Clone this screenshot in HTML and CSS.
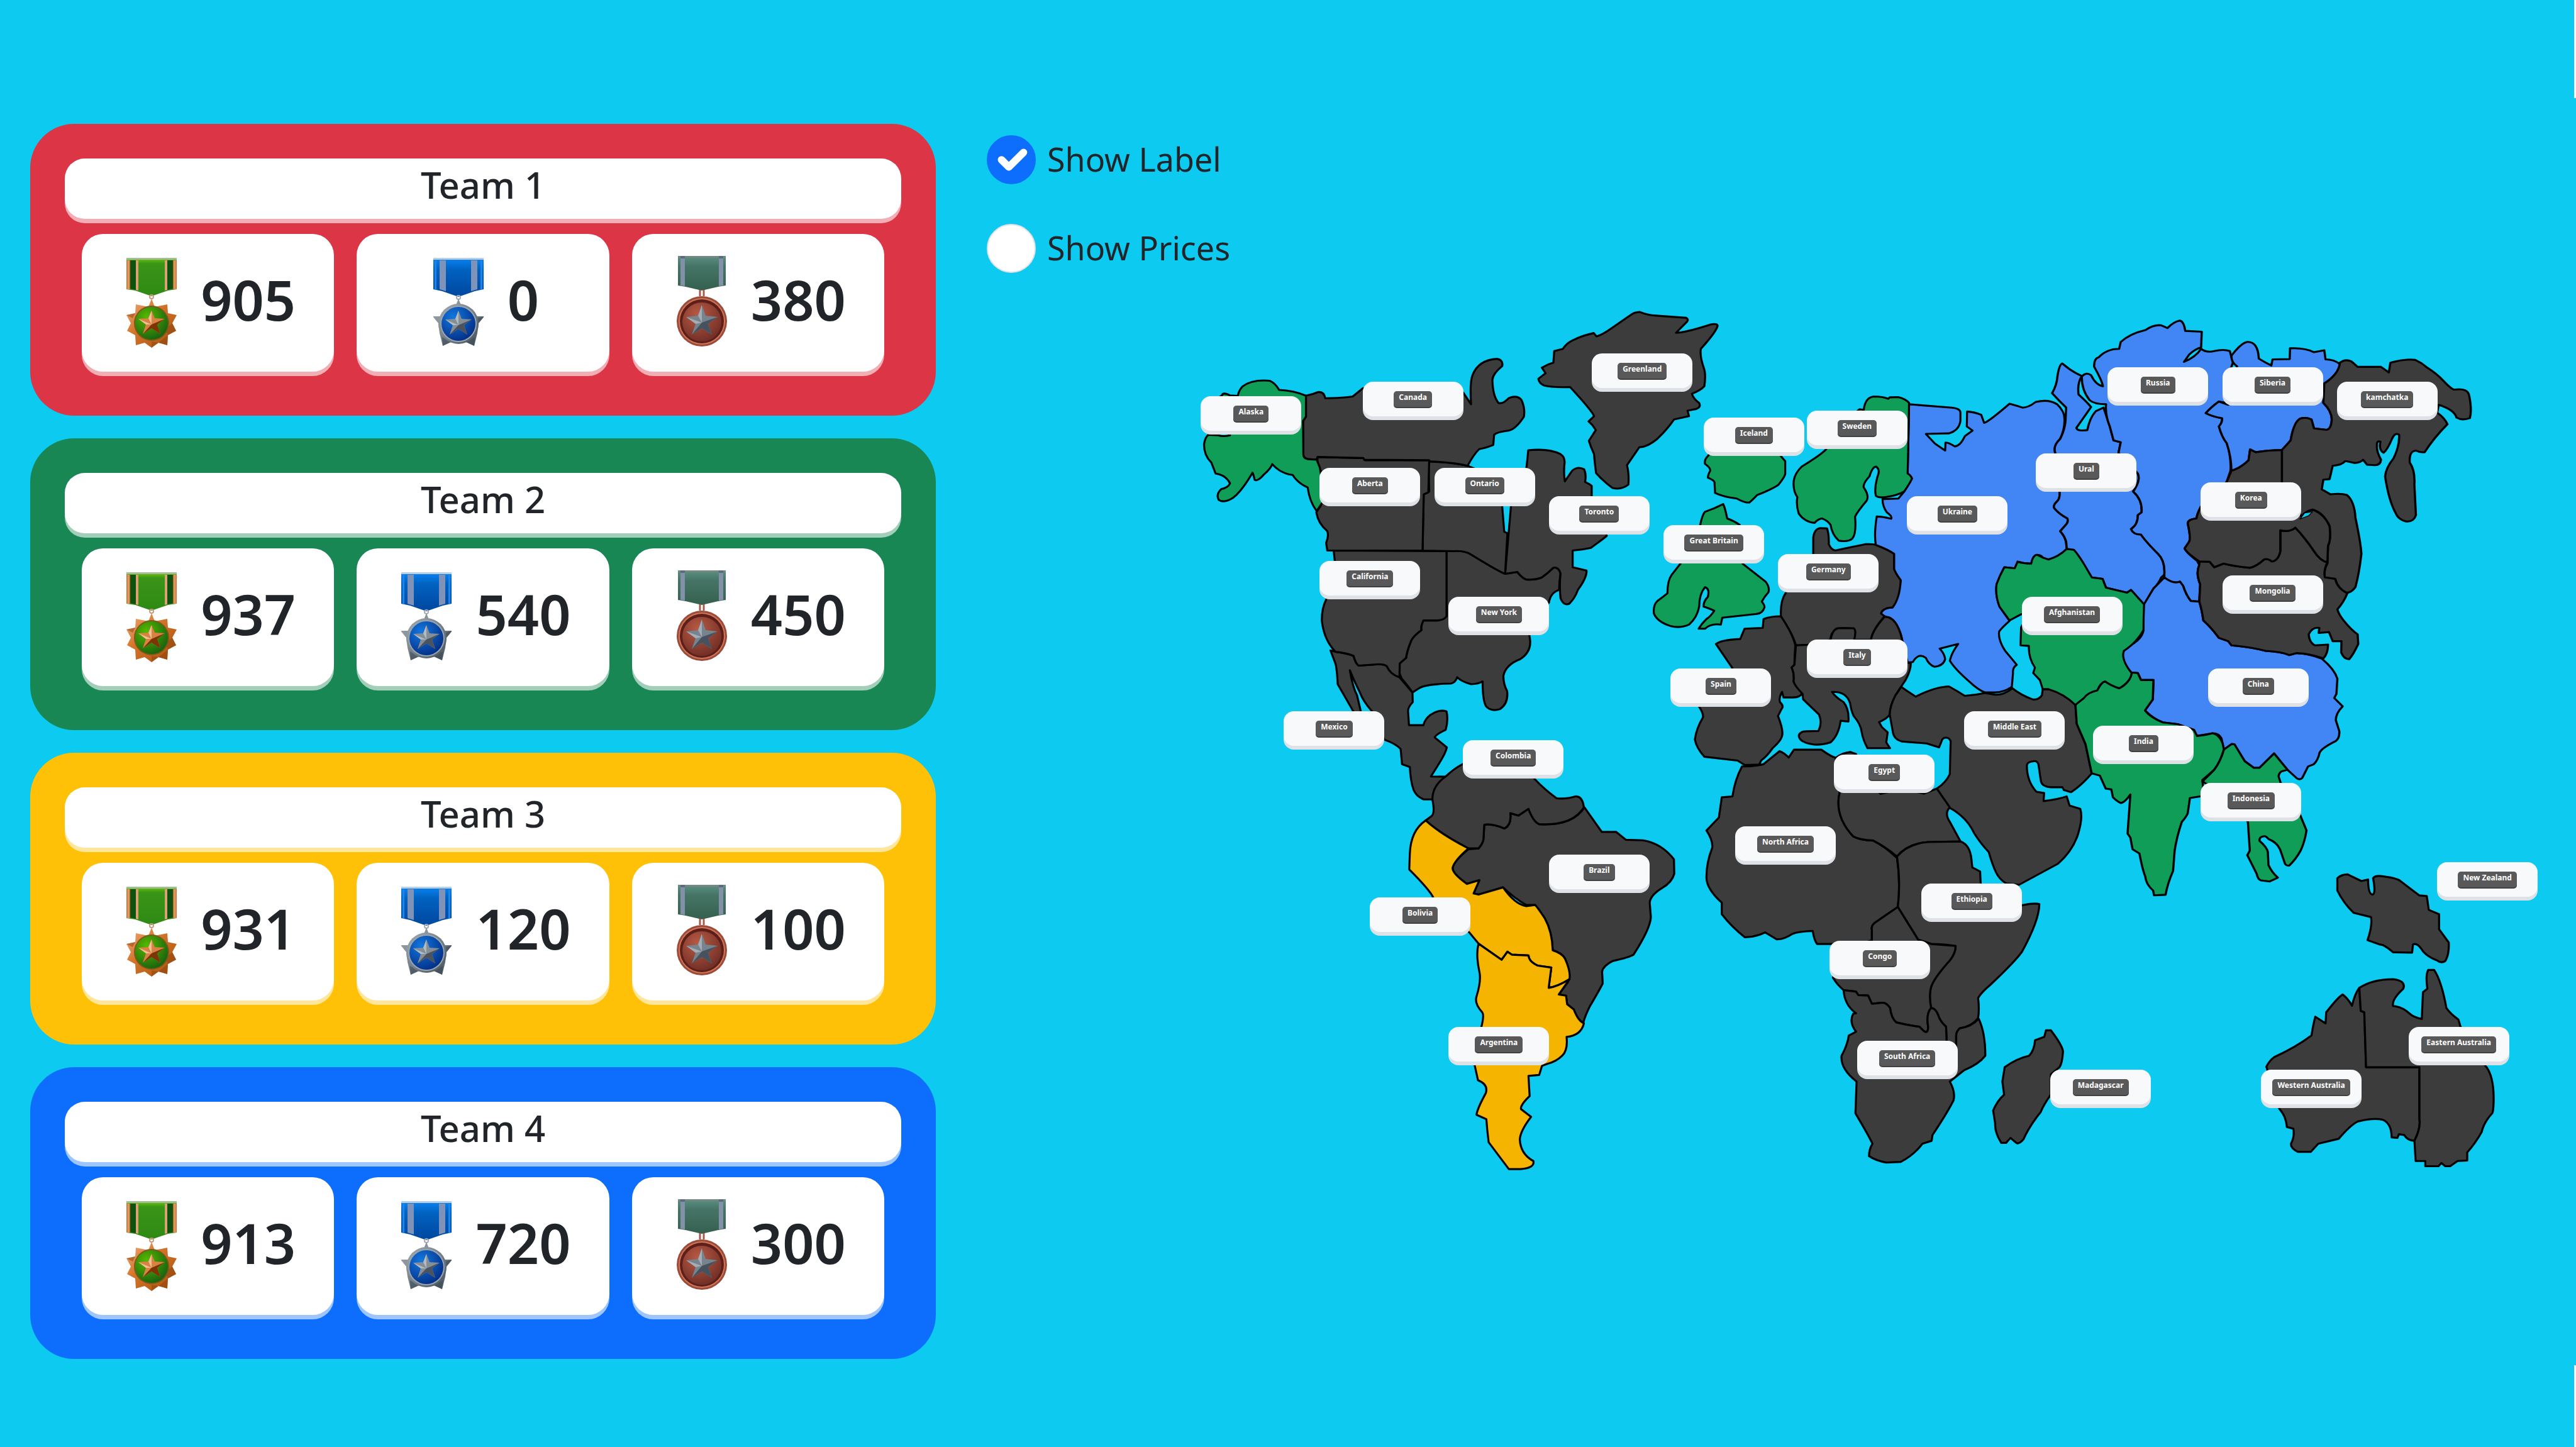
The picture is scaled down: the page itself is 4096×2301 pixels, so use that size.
FILE: index.html
```html
<!DOCTYPE html>
<html lang="en">
<head>
<meta charset="utf-8">
<meta name="viewport" content="width=device-width, initial-scale=1">
<title>World Map Game</title>
<link rel="stylesheet" href="styles.css">
</head>
<body>
<svg class="defs" width="0" height="0" aria-hidden="true">
  <defs>
    <linearGradient id="greenRibbon" x1="0" y1="0" x2="0" y2="1"><stop offset="0" stop-color="#6fce00"/><stop offset=".15" stop-color="#3a9418"/><stop offset="1" stop-color="#2f8a14"/></linearGradient>
    <linearGradient id="blueRibbon" x1="0" y1="0" x2="0" y2="1"><stop offset="0" stop-color="#0a84f5"/><stop offset=".3" stop-color="#0062c0"/><stop offset="1" stop-color="#0047a0"/></linearGradient>
    <linearGradient id="tealRibbon" x1="0" y1="0" x2="0" y2="1"><stop offset="0" stop-color="#5b8f82"/><stop offset=".3" stop-color="#457466"/><stop offset="1" stop-color="#35604f"/></linearGradient>
    <linearGradient id="copper" x1="0" y1="0" x2="1" y2="1"><stop offset="0" stop-color="#f3b184"/><stop offset=".4" stop-color="#d4752b"/><stop offset="1" stop-color="#a8500c"/></linearGradient>
    <linearGradient id="steel" x1="0" y1="0" x2="1" y2="1"><stop offset="0" stop-color="#a4adb3"/><stop offset=".5" stop-color="#74808a"/><stop offset="1" stop-color="#45515b"/></linearGradient>
    <radialGradient id="greenCore" cx=".35" cy=".3" r=".8"><stop offset="0" stop-color="#55b800"/><stop offset="1" stop-color="#155c10"/></radialGradient>
    <radialGradient id="blueCore" cx=".35" cy=".3" r=".8"><stop offset="0" stop-color="#1277e0"/><stop offset="1" stop-color="#022a80"/></radialGradient>
    <radialGradient id="redCore" cx=".4" cy=".3" r=".8"><stop offset="0" stop-color="#b85a44"/><stop offset="1" stop-color="#6a2a22"/></radialGradient>
    <symbol id="medal-green" viewBox="0 0 80 150">
      <path fill="url(#greenRibbon)" d="M0 3h80v50l-14 2-26 9-26-9-14-2z"/>
      <path fill="#a6bb9a" d="M0 3h80v3H0z"/>
      <path fill="#0e5210" d="M6 7h9v47l-9-2zM65 7h9v45l-9 2z"/>
      <path fill="#cf7a35" d="M0 7h6v46H0zM74 7h6v46h-6z"/>
      <path fill="#dba173" d="M2 7h2v46H2zM76 7h2v46h-2zM15 7h4v48l-4-1zM61 7h4v47l-4 1z"/>
      <circle cx="40" cy="65" r="3" fill="none" stroke="#c99a7d" stroke-width="2"/>
      <path fill="url(#copper)" d="M40 68l5 13 20-4 1 14 14 3-7 13 6 12-13 7-1 16-14-4-11 8-11-8-14 4-1-16-13-7 6-12-7-13 14-3 1-14 20 4z"/>
      <path fill="#8a430e" opacity=".5" d="M73 107l6 12-13 7-4-10zM51 138l-11 8v-10zM66 126l-1 16-14-4zM14 91L0 94l10 5z"/>
      <circle cx="40" cy="107" r="28" fill="#7b5a1a"/>
      <circle cx="40" cy="107" r="26" fill="url(#greenCore)"/>
      <path fill="#d88243" d="M40 87l5 12 16 1-12 9 5 15-14-9-14 9 5-15-12-9 16-1z"/>
      <path fill="#7c3606" d="M40 109l9 0 5 15-14-9zM40 109l21-9-12 9zM40 109l-14 15 14-9z"/>
      <path fill="#f6be95" d="M40 87v22l-5-10zM19 100l21 9-9 0z"/>
    </symbol>
    <symbol id="medal-blue" viewBox="0 0 80 150">
      <path fill="url(#blueRibbon)" d="M0 3h80v50l-14 3-26 9-26-9-14-3z"/>
      <path fill="#bccee4" d="M0 3h80v3H0z"/>
      <path fill="#1a86ec" d="M2 7h3v47l-3-1zM75 7h3v46l-3 1z"/>
      <path fill="#7f93b8" d="M10 7h10v49l-10-3zM60 7h10v46l-10 3z"/>
      <circle cx="40" cy="66" r="3" fill="none" stroke="#a5adb3" stroke-width="2"/>
      <path fill="url(#steel)" d="M40 68l4 10 14 8 9 10h14l-9 11-2 16-5 20-13-6H28l-13 6-5-20-2-16-9-11h14l9-10 14-8z"/>
      <path fill="#36424c" opacity=".5" d="M81 96l-9 11-4-7zM65 143l-13-6 14-8zM15 143l13-6-14-8z"/>
      <circle cx="40" cy="108" r="32" fill="url(#steel)"/>
      <circle cx="40" cy="108" r="29" fill="#9aa5ad"/>
      <circle cx="40" cy="108" r="27" fill="url(#blueCore)"/>
      <path fill="#848e97" d="M40 87l5 13 16 1-12 9 5 15-14-9-14 9 5-15-12-9 16-1z"/>
      <path fill="#4b545e" d="M40 110l9 0 5 15-14-9zM40 110l21-9-12 9zM40 110l-14 15 14-9z"/>
      <path fill="#b3bbc2" d="M40 87v23l-5-10zM19 101l21 9-9 0z"/>
    </symbol>
    <symbol id="medal-red" viewBox="0 0 80 150">
      <path fill="url(#tealRibbon)" d="M2 0h76v47l-12 2-26 6-26-6-12-2z"/>
      <path fill="#73897f" d="M2 0h76v3H2z"/>
      <path fill="#8391a8" d="M6 3h7v45l-7-1zM67 3h7v44l-7 1z"/>
      <path fill="#586b80" d="M6 0h7v4H6zM67 0h7v4h-7z"/>
      <path fill="none" stroke="#a85a4a" stroke-width="3" d="M37 54v10M43 54v10"/>
      <circle cx="40" cy="104" r="40" fill="#9c4a3a"/>
      <circle cx="40" cy="104" r="37" fill="#cd7757"/>
      <circle cx="40" cy="104" r="35" fill="#5e1f1a"/>
      <circle cx="40" cy="105" r="31" fill="url(#redCore)"/>
      <path fill="#77838d" d="M40 78l6 17 19 2-15 11 6 17-16-10-16 10 6-17-15-11 19-2z"/>
      <path fill="#46535e" d="M40 106l10 2 6 17-16-10zM40 106l25-9-15 11zM40 106l-16 19 16-10z"/>
      <path fill="#a3adb5" d="M40 78v28l-6-11zM15 97l25 9-10 2z"/>
    </symbol>
  </defs>
</svg>

<main class="board">
  <section class="teams">
    <article class="team team-red">
      <h2 class="team-name">Team 1</h2>
      <div class="scores">
        <div class="score"><svg class="medal"><use href="#medal-green"/></svg><span>905</span></div>
        <div class="score"><svg class="medal"><use href="#medal-blue"/></svg><span>0</span></div>
        <div class="score"><svg class="medal"><use href="#medal-red"/></svg><span>380</span></div>
      </div>
    </article>
    <article class="team team-green">
      <h2 class="team-name">Team 2</h2>
      <div class="scores">
        <div class="score"><svg class="medal"><use href="#medal-green"/></svg><span>937</span></div>
        <div class="score"><svg class="medal"><use href="#medal-blue"/></svg><span>540</span></div>
        <div class="score"><svg class="medal"><use href="#medal-red"/></svg><span>450</span></div>
      </div>
    </article>
    <article class="team team-yellow">
      <h2 class="team-name">Team 3</h2>
      <div class="scores">
        <div class="score"><svg class="medal"><use href="#medal-green"/></svg><span>931</span></div>
        <div class="score"><svg class="medal"><use href="#medal-blue"/></svg><span>120</span></div>
        <div class="score"><svg class="medal"><use href="#medal-red"/></svg><span>100</span></div>
      </div>
    </article>
    <article class="team team-blue">
      <h2 class="team-name">Team 4</h2>
      <div class="scores">
        <div class="score"><svg class="medal"><use href="#medal-green"/></svg><span>913</span></div>
        <div class="score"><svg class="medal"><use href="#medal-blue"/></svg><span>720</span></div>
        <div class="score"><svg class="medal"><use href="#medal-red"/></svg><span>300</span></div>
      </div>
    </article>
  </section>

  <section class="world">
    <div class="options">
      <label class="option"><input type="checkbox" checked><span>Show Label</span></label>
      <label class="option"><input type="checkbox"><span>Show Prices</span></label>
    </div>
    <div class="map">
      <svg class="land" viewBox="2538 718 3165 1583">
        <g transform="translate(2800 1600) scale(.63776)">
          <path d="M1102 290L1162 375L1212 375L1245 402L1305 404Q1370 415 1412 470L1413 520Q1405 550 1370 570Q1330 595 1328 620L1332 670Q1330 710 1272 800Q1255 810 1200 822Q1165 840 1163 860Q1165 890 1165 900Q1150 930 1120 980Q1105 1010 1098 1035Q1080 1030 1065 990L1042 972L1038 942L1013 938L1045 895Q1055 860 1035 815Q1025 795 992 785Q990 720 965 675Q935 630 930 628L900 628Q860 605 820 567L735 592L718 588L738 542L695 555Q645 520 645 500Q650 475 700 435L735 432Q750 415 752 400L755 350Q780 345 825 363Q850 350 845 310L873 318L908 295Q925 340 945 348Q1060 355 1102 290Z"/>
        </g>
        <g transform="translate(2640 680) scale(.63776 .61224)">
          <path d="M473 1238L490 1243Q530 1248 553 1258Q560 1285 570 1293L640 1288Q660 1288 668 1295Q680 1325 712 1335L757 1390L758 1425Q740 1445 742 1460L745 1508L795 1508Q800 1485 820 1470Q850 1450 875 1458Q882 1490 872 1525Q840 1540 834 1552L876 1588Q874 1605 850 1645L821 1693L871 1694L826 1776L796 1776Q770 1765 761 1742Q750 1710 748 1659L721 1649L716 1594Q700 1575 659 1560L640 1500L617 1458Q585 1420 575 1390Q560 1360 540 1310Q550 1370 565 1400L578 1458L575 1490L552 1458Q520 1400 498 1360Q495 1300 490 1285Z"/>
          <path d="M875 880L900 878Q940 878 960 892Q1050 950 1078 962L1120 955Q1135 975 1150 982Q1180 985 1205 975Q1225 960 1245 940Q1262 935 1270 960Q1265 990 1265 1020Q1235 1030 1230 1065L1180 1120L1162 1185Q1175 1240 1130 1270Q1080 1290 1072 1330Q1072 1360 1085 1385Q1090 1430 1060 1450Q1030 1460 1012 1440Q1000 1420 1000 1350Q985 1360 960 1360Q925 1350 912 1335Q905 1355 890 1358Q800 1360 780 1375L757 1390Q745 1370 720 1340Q705 1310 713 1285L735 1265Q738 1240 750 1210Q755 1190 788 1165Q785 1150 795 1130L840 1130Q865 1130 875 1115Z"/>
          <path d="M484 878L875 880L875 1115Q865 1130 840 1130L795 1130Q785 1150 788 1165Q755 1190 750 1210Q738 1240 735 1265L713 1285L712 1335Q680 1325 668 1295Q660 1288 640 1288L570 1293Q560 1285 553 1258Q530 1248 490 1243Q450 1200 443 1130Q443 1085 458 1055L480 1000L488 915Z"/>
          <path d="M1152 578Q1155 550 1158 516Q1230 508 1270 530Q1285 540 1284 560Q1280 600 1285 628Q1300 605 1310 590Q1330 572 1352 585Q1360 605 1355 630Q1375 640 1378 645L1378 700L1410 750L1430 825Q1400 850 1375 868Q1345 875 1312 878L1312 938Q1340 945 1360 950Q1362 975 1330 1020Q1320 1050 1300 1070Q1280 1078 1270 1050Q1265 1010 1270 960Q1262 935 1245 940Q1225 960 1205 975Q1180 985 1150 982Q1135 975 1120 955L1078 962L1098 720L1120 650Z"/>
          <path d="M812 556Q900 560 948 572L990 590L1050 640L1068 720L1075 810L1086 815L1078 962Q1050 950 960 892Q940 878 900 880L792 878L796 675L815 665Z"/>
          <path d="M428 540L587 544L592 552L815 552L812 668L796 675L792 878L462 878L458 850Q468 825 462 808Q430 780 424 740L440 715L445 600L428 570Z"/>
          <path d="M388 319Q410 315 430 306Q450 303 455 328Q510 328 550 322L585 292L700 300L860 290L933 308L960 350Q955 270 965 245Q985 190 1050 186Q1072 190 1068 212Q1035 240 1034 262Q1035 320 1055 345Q1070 350 1090 328Q1120 315 1135 335Q1148 365 1143 395Q1115 440 1090 445Q1050 450 1040 460L1037 497Q1010 508 988 512Q970 530 948 572Q900 560 815 556L815 552L590 550L587 544L428 540L425 550L395 548Q378 545 379 530L378 410L388 395Z"/>
          <path class="green" d="M388 319Q345 300 295 298Q280 272 262 265Q200 260 168 286Q155 300 152 320L125 318Q100 305 97 318L60 345L100 440L125 462Q100 468 85 462L50 460Q38 470 35 495Q35 535 60 560Q66 575 75 600Q110 605 125 635Q120 650 95 656Q75 675 86 695Q105 708 135 688Q165 665 203 597Q207 605 210 622Q220 630 240 606Q268 580 271 566Q300 600 342 605Q360 635 394 650Q400 700 425 735L455 690L436 578L425 550L395 548Q378 545 379 530L378 410L388 395Z"/>
          <path d="M1510 30Q1525 17 1545 17Q1570 28 1600 30L1705 38Q1715 44 1708 52L1670 92Q1700 92 1790 62Q1812 58 1814 66Q1812 85 1756 150Q1752 175 1765 215Q1775 240 1768 285Q1755 300 1725 312Q1730 330 1750 345Q1758 360 1740 367L1710 373L1715 393L1663 405Q1640 440 1605 475Q1570 505 1543 505L1500 570Q1508 600 1505 640Q1480 660 1450 652Q1420 630 1393 598Q1388 560 1386 530Q1375 505 1368 482L1392 443L1380 425L1367 412L1386 393Q1380 375 1303 288Q1240 290 1215 283Q1195 275 1193 258L1218 238L1205 218Q1225 205 1245 200L1248 158L1278 150Q1290 130 1310 120Q1350 100 1385 93L1395 105Q1415 98 1440 80Z"/>
        </g>
        <g transform="translate(2800 1600) scale(.63776)">
          <path d="M680 140Q650 155 620 184Q575 215 575 262Q585 310 572 320L552 335Q600 380 700 432L735 432Q750 415 752 400L755 350Q780 345 825 363Q850 350 845 310L873 318L908 295Q925 340 945 348Q1060 355 1100 290Q1095 250 1070 252Q1035 262 1005 258Q960 225 928 190L900 140L780 110Z"/>
          <path class="yellow" d="M552 335Q600 380 700 432Q650 475 645 500Q645 520 695 555L738 542L718 588L735 592L820 567Q860 625 900 632L930 628Q935 630 965 675Q990 720 992 785Q1025 795 1035 815Q1055 860 1050 885Q1010 910 978 915L987 845L940 838Q910 825 908 803L850 800L835 790L815 818L735 762L702 722L640 680L578 602Q565 575 495 505L497 450Q500 370 552 335Z"/>
          <path class="yellow" d="M735 762L815 818L835 790L850 800L908 803Q910 825 940 838L987 845L978 915Q1010 910 1050 885L1013 938L1038 942L1042 972L1065 990Q1080 1030 1100 1038Q1090 1080 1040 1085Q1045 1130 1025 1150Q1005 1170 975 1178L955 1185L945 1217L908 1220L912 1290Q880 1320 882 1335L917 1362Q880 1410 878 1440Q880 1490 925 1515Q930 1540 880 1543L840 1543L770 1450Q765 1410 762 1370L728 1355Q730 1335 760 1280Q770 1250 733 1235L722 1185L700 1120L745 1050Q755 1010 748 1000Q720 970 728 945Q745 890 738 860Q725 800 735 762Z"/>
        </g>
        <g transform="translate(3600 680) scale(.63776 .61224)">
          <path class="blue" d="M972 350L1120 362Q1150 365 1150 380L1150 410Q1145 445 1110 455L1030 457L1062 492L1097 517Q1098 500 1098 488Q1110 488 1130 502Q1150 500 1165 465L1192 445L1172 430L1173 376Q1200 378 1222 388L1232 417Q1245 415 1320 348Q1345 355 1365 362Q1385 362 1410 342Q1455 330 1485 350Q1510 375 1510 400Q1512 440 1495 475Q1470 500 1478 525L1460 590L1493 665Q1495 690 1485 700Q1470 715 1475 725Q1490 745 1520 762Q1525 775 1515 785L1495 808Q1510 825 1515 845L1518 872Q1490 905 1455 910L1438 908Q1430 890 1410 895Q1405 915 1395 925Q1370 925 1348 918L1338 942L1302 938Q1285 970 1275 1000Q1270 1040 1285 1080L1320 1132Q1295 1155 1284 1170Q1280 1200 1305 1240Q1325 1265 1345 1290Q1330 1300 1332 1320L1328 1370Q1300 1390 1270 1390L1235 1390Q1210 1380 1180 1350Q1130 1305 1113 1275Q1120 1245 1142 1215L1078 1232Q1095 1250 1097 1270Q1090 1295 1060 1297Q1040 1290 1030 1265Q1005 1245 985 1280L967 1282L955 1240L948 1200Q940 1150 905 1120Q880 1115 875 1105Q880 1085 915 1083Q935 1050 943 985Q925 960 920 945L920 890Q900 875 857 858Q850 820 860 755Q880 755 910 763Q915 755 895 740Q880 720 880 692L935 690L955 665L982 618L967 600Z"/>
          <path d="M640 890L640 830Q645 795 670 797L688 798Q695 820 694 855Q705 880 720 877Q770 865 820 855Q850 853 857 858Q900 875 920 890L920 945Q925 960 943 985Q940 1050 915 1083Q880 1085 875 1105L887 1115Q845 1165 840 1200L840 1240L782 1230L782 1195Q790 1165 780 1160Q740 1155 720 1160Q700 1175 700 1200L660 1218L580 1220Q570 1180 528 1115Q525 1060 545 1030L580 980Z"/>
          <path d="M528 1115Q570 1180 578 1220Q575 1260 575 1290L565 1300Q575 1320 572 1350Q575 1365 603 1392Q595 1408 570 1408L537 1408L532 1388Q520 1410 525 1425Q540 1440 530 1450L518 1475Q535 1520 533 1540Q533 1560 500 1590Q480 1620 460 1635L453 1650L403 1652L378 1636L263 1622Q235 1590 230 1560Q235 1520 258 1480Q260 1465 245 1442L300 1380L360 1302L303 1215Q320 1200 387 1197L402 1160L465 1157L468 1125Q490 1115 528 1115Z"/>
          <path d="M580 1220L620 1218L700 1200Q705 1165 725 1158L780 1158Q790 1165 782 1200L840 1200Q845 1165 887 1117Q930 1115 948 1200L967 1282L978 1285Q978 1310 960 1345Q940 1375 925 1400Q905 1440 905 1470Q895 1485 868 1497L878 1515L898 1534L893 1570L906 1591L828 1591Q812 1560 808 1534Q805 1505 780 1475Q770 1450 768 1430Q755 1385 705 1388Q715 1405 745 1425Q765 1450 762 1495L735 1492Q728 1545 700 1570Q670 1580 643 1578Q590 1570 590 1545Q595 1530 615 1530L658 1529Q672 1500 660 1470L605 1415L603 1395Q575 1365 572 1350Q575 1320 565 1300L575 1290Z"/>
          <path d="M945 1370Q965 1385 995 1405Q1060 1370 1110 1368Q1140 1385 1165 1402Q1200 1400 1235 1392L1270 1398Q1300 1400 1330 1375Q1360 1400 1400 1415Q1420 1418 1432 1400L1435 1378L1455 1378Q1510 1395 1548 1435L1553 1503L1583 1576L1605 1682Q1570 1725 1533 1750L1508 1742L1503 1732L1463 1732Q1430 1730 1428 1706L1420 1649Q1415 1635 1403 1638Q1380 1640 1380 1654Q1380 1710 1413 1748L1440 1753L1438 1782Q1490 1775 1518 1765L1528 1798L1565 1810Q1575 1840 1558 1899Q1540 1960 1488 2008L1353 2084L1308 2079Q1285 2065 1273 2039Q1260 2010 1248 1966Q1220 1935 1198 1899Q1180 1860 1153 1836Q1130 1815 1113 1807L1068 1737Q1100 1715 1113 1685L1116 1565Q1110 1552 1098 1553Q1087 1555 1085 1565L1076 1588L1033 1574L948 1567Q920 1560 916 1534L905 1470Q905 1440 925 1400Z"/>
          <path class="green" d="M972 345Q960 330 935 324L905 325L900 330Q880 322 850 322Q820 325 815 370L800 368L720 440L685 512Q670 530 600 575Q570 605 572 640Q572 665 585 685Q580 715 590 745Q610 775 645 778Q655 765 670 762Q690 770 700 785Q705 820 728 842Q760 848 775 835Q790 820 785 755Q795 735 825 698Q835 680 815 650Q812 635 835 610Q845 575 858 575Q870 585 866 600Q850 650 857 680Q865 688 890 685Q930 680 955 665Q975 635 982 618Q978 605 967 600Q970 480 972 345Z"/>
          <path class="green" d="M275 537Q262 550 265 565Q285 580 283 590Q275 605 275 615Q298 625 298 632L300 670Q330 685 375 690Q400 705 418 705Q430 695 445 678Q500 655 520 640Q543 610 543 600L543 555L530 540L500 490L400 470L310 490Z"/>
          <path class="green" d="M248 788Q255 750 265 738Q300 725 328 710Q335 725 342 762Q365 770 385 785L410 860L395 925L475 990Q490 1010 485 1028Q470 1045 462 1062Q475 1080 470 1085Q465 1105 440 1107L325 1120L320 1145Q285 1140 265 1160L243 1160Q255 1140 270 1125Q285 1115 297 1095Q275 1085 260 1080Q260 1060 275 1045Q282 1015 265 1010Q245 1035 245 1080Q238 1120 210 1145Q180 1160 145 1150Q100 1135 88 1105Q85 1075 100 1060Q120 1045 135 1032Q135 985 150 965L180 925L230 860Z"/>
        </g>
        <g transform="translate(4560 680) scale(.68878 .61224)">
          <path class="blue" d="M-2 203Q25 230 60 248Q45 275 50 315Q75 340 90 360Q65 400 43 435Q45 448 78 443Q85 400 105 375L130 362L150 430L162 480L185 487L178 525L240 600Q250 625 225 665Q255 695 252 740L240 750Q240 785 218 800Q225 820 250 820Q265 845 305 890Q328 915 325 965L315 975Q305 1000 290 1015L260 1075L218 1020L205 1030L138 1012L127 980L92 975Q60 920 35 880L12 872L10 845Q5 825 -9 808L9 785Q18 775 14 762Q-14 745 -28 725Q-33 715 -19 700Q-9 690 -11 665L-42 590L-25 525Q-33 500 -9 475Q6 440 8 410L10 362Q-15 335 -35 310Q-20 280 -18 250Q-12 205 -2 203Z"/>
          <path class="blue" d="M60 250Q75 232 90 245Q105 280 128 285Q125 265 100 215Q98 185 115 180Q140 150 180 150L185 125Q215 95 265 82Q290 62 315 65L335 75Q355 52 375 48Q388 52 392 85L445 88L443 145Q425 150 405 170L388 197Q425 180 443 150Q460 165 485 158Q515 150 535 158L545 200L540 215L525 345L500 340Q475 360 458 382Q480 395 510 400Q512 415 500 430Q510 470 525 490Q540 540 537 590L525 630L480 690L442 720Q430 745 428 762Q400 765 400 780Q410 830 405 845L390 870Q395 885 430 915L437 930Q425 960 440 1000L437 1062L410 1060Q395 1040 385 1005L375 990Q355 1000 325 980L325 965Q328 915 305 890Q265 845 250 820Q225 820 218 800Q240 785 240 750L252 740Q255 695 225 665Q250 625 240 600L178 525L185 487L162 480L150 430Q135 390 138 350Q100 350 85 335Q60 300 60 250Z"/>
          <path class="blue" d="M540 175Q570 130 590 125Q625 122 628 185Q650 200 668 210L672 188L727 187L728 148Q775 145 805 162L838 155L842 188Q870 188 888 205Q885 240 838 275L835 345Q862 375 862 405Q860 440 845 442L805 437L797 405Q780 395 760 402Q740 415 730 480L705 515Q660 515 618 523L600 513L595 552Q570 580 540 590Q540 540 525 490Q510 470 500 430Q512 415 510 400Q480 395 458 382Q475 360 500 340L530 352L550 280L558 213Q540 200 540 175Z"/>
          <path class="blue" d="M325 975Q355 1000 375 990L385 1005Q395 1040 410 1060L437 1062Q445 1090 450 1130Q475 1155 500 1193L530 1205L540 1220Q600 1225 650 1240Q700 1243 725 1255L750 1248Q790 1250 830 1268Q870 1305 880 1340L877 1395L870 1410L897 1440Q875 1465 875 1490L886 1529Q888 1555 875 1565Q830 1590 823 1607Q818 1635 804 1649L786 1657L767 1699Q760 1707 750 1700L720 1669L677 1610L630 1662L612 1662L583 1638L550 1581L541 1576L516 1596L508 1555Q500 1537 480 1537L428 1547L420 1525L370 1505L320 1498Q290 1485 263 1455L288 1415L290 1345L250 1345L240 1320L220 1318Q180 1275 192 1245Q200 1230 230 1210Q255 1190 258 1165L258 1075L290 1015Z"/>
          <path d="M888 200Q905 185 925 195L945 215L1020 215L1045 235L1050 200Q1100 185 1130 190Q1150 200 1165 215Q1200 240 1220 265Q1245 295 1255 297Q1300 290 1303 320Q1312 370 1305 400Q1280 410 1262 398Q1255 370 1205 352L1200 380Q1225 400 1233 422Q1190 470 1160 523Q1145 525 1135 518Q1110 515 1112 560Q1130 590 1127 640L1132 750Q1125 775 1100 773Q1075 765 1068 745Q1045 700 1033 610Q1035 580 1060 545Q1080 500 1078 460Q1065 450 1055 475Q1040 515 1028 525Q1012 515 1018 485Q1005 480 1007 500Q1005 520 1020 550Q1018 570 1000 570L975 568L962 550Q955 560 935 562Q910 555 905 555Q895 570 865 572L855 620L835 622L830 657L858 675Q890 670 910 677Q935 700 938 760Q955 850 957 890Q950 960 938 1010Q925 1030 910 1030Q880 1015 873 980L840 975Q835 950 848 925L850 860Q860 840 855 790Q835 740 800 730Q780 735 765 755L730 700L702 640L702 515L730 480Q740 415 760 402Q780 395 797 405L805 437L845 442Q860 440 862 405Q862 375 835 345L838 275Q885 240 888 200Z"/>
          <path d="M437 917L470 918L485 938L515 925Q550 935 600 940Q620 935 645 910Q655 905 670 917Q690 915 697 880L697 805Q730 812 745 795Q775 830 805 880Q825 915 848 920Q835 950 840 975L873 980Q880 1015 912 1032Q900 1065 880 1090Q885 1110 900 1130Q925 1165 945 1180L947 1215Q930 1255 918 1270Q900 1270 892 1245L893 1205L865 1205L853 1172L820 1175L822 1157Q800 1153 788 1180Q790 1210 808 1220L850 1217Q850 1250 835 1267Q790 1250 750 1248L725 1255Q700 1243 650 1240Q600 1225 540 1220L530 1205L500 1193Q475 1155 450 1130Q445 1090 437 1062L440 1000Q425 960 437 930Z"/>
          <path d="M540 590Q570 580 595 552L600 513L618 523Q660 515 702 515L702 640L730 700L765 755Q780 732 805 732Q840 750 855 790Q860 840 850 860L848 920Q825 915 805 880Q775 830 745 795Q730 812 697 805L697 880Q690 915 670 917Q655 905 645 910Q620 935 600 940Q550 935 515 925L485 938L470 918L437 917Q395 885 390 870L405 845Q410 830 400 780Q400 765 428 762Q430 745 442 720L480 690L525 630Z"/>
          <path class="water" d="M760 764L775 742L800 738L788 752Z"/>
          <path class="green" d="M40 1435Q70 1395 75 1395L110 1382Q125 1350 135 1350Q155 1365 180 1375Q215 1355 220 1318L240 1320L250 1345L290 1345L288 1415L263 1455Q280 1480 320 1498L370 1505L420 1525L430 1547Q455 1545 480 1537Q510 1545 516 1596Q505 1640 485 1669L447 1706L452 1763L407 1771L400 1826Q395 1840 381 1857Q365 1910 358 1961L353 2034Q335 2080 329 2120L292 2122L289 2105Q265 2080 264 2055Q255 2030 245 1971L223 1956L216 1914L207 1899L216 1758Q200 1785 186 1789Q175 1785 160 1768L155 1740L137 1737L118 1690L92 1682L72 1576L44 1503Z"/>
          <path class="green" d="M516 1596L541 1576L550 1577L583 1638L612 1662L630 1662L677 1610L720 1669L700 1675Q690 1685 692 1695L698 1716L740 1780L762 1836L781 1888Q775 1930 762 1961Q745 1995 725 2015Q715 2015 712 2008L696 1956Q685 1930 659 1919Q650 1905 640 1910Q630 1912 630 1925Q655 1950 657 1966L659 2013Q670 2040 689 2058L663 2072L635 2068Q625 2065 621 2044L591 1977L599 1961L593 1857L530 1770L447 1711L485 1669Q505 1640 516 1596Z"/>
        </g>
        <g transform="translate(3600 680) scale(.63776 .61224)">
          <path class="green" d="M1518 872L1543 875Q1560 895 1580 930L1605 975L1642 980L1654 1012L1727 1030L1741 1020L1786 1072Q1784 1120 1784 1165Q1760 1210 1716 1240Q1705 1270 1743 1320Q1740 1350 1700 1375Q1670 1365 1651 1350Q1635 1355 1624 1382Q1590 1390 1578 1410L1548 1435Q1510 1395 1455 1378L1435 1378L1425 1345L1402 1320L1408 1300Q1385 1265 1387 1222L1358 1220L1360 1155L1380 1120L1362 1107L1320 1130L1285 1080Q1270 1040 1275 1000Q1285 970 1302 938L1338 942L1348 918Q1370 925 1395 925Q1400 895 1415 893Q1435 905 1455 910Q1490 900 1518 872Z"/>
        </g>
        <g transform="translate(3720 1600) scale(.63776)">
          <path d="M205 148Q250 148 280 140Q310 115 335 95Q350 100 367 117L385 90L480 90Q515 115 530 118L560 150L543 240Q525 320 590 390Q610 402 660 405Q700 425 742 465Q755 550 745 635Q700 665 665 690Q652 700 655 715L655 750L600 790L520 763L465 763Q455 750 450 718Q400 720 380 728Q350 748 325 747L285 723Q250 740 215 740Q170 705 135 660L135 620Q80 570 82 530Q82 480 102 430Q105 405 82 370L125 325L135 255L172 252Q180 195 205 148Z"/>
          <path d="M530 118Q555 100 580 98L600 105L640 200L685 243L760 225L835 242L880 225L925 290Q905 310 925 340L962 408L850 410Q780 415 742 460Q700 425 660 405Q610 402 590 390Q525 320 543 240Z"/>
          <path d="M742 460Q780 415 850 410L962 408Q995 420 1000 470L1003 498L1030 512L1032 555L1090 640L1180 628Q1220 620 1235 625Q1235 680 1175 790Q1150 825 1065 905Q1035 930 1023 950Q1028 990 1023 1020Q1000 1050 960 1055Q948 1065 947 1080L947 1130L915 1130L912 1050Q890 1030 885 1010Q875 985 860 985Q850 930 865 900Q880 870 925 820Q945 795 945 770Q900 763 860 763L815 748L745 635Q755 550 742 460Z"/>
          <path d="M745 635L815 748L860 763L945 770Q945 795 925 820Q880 870 865 900Q850 930 860 985Q842 1005 850 1050Q850 1075 835 1065L820 1050Q780 1045 740 1035Q722 1020 718 985Q705 965 690 967L655 970L642 942L608 940L600 928L557 923Q535 905 520 880L545 790L655 750L655 715Q652 700 665 690Z"/>
          <path d="M557 923L600 928L608 940L642 942L655 970L690 967Q705 965 718 985Q722 1020 740 1035Q780 1045 820 1050L835 1065Q850 1075 850 1050Q842 1005 860 985Q875 985 885 1010Q890 1030 912 1050L915 1130L947 1130L947 1080Q948 1065 960 1055Q1000 1050 1025 1022Q1048 1070 1048 1150Q1025 1180 975 1200L925 1240Q945 1275 938 1305Q915 1350 865 1425L862 1445L830 1455Q800 1495 755 1518L705 1520Q670 1515 645 1498Q645 1475 657 1455Q640 1420 598 1350L602 1240Q545 1195 550 1150Q570 1115 575 1080L600 1067Q575 1035 590 1005L600 1003Q560 975 557 923Z"/>
          <path d="M1252 1085L1258 1062L1275 1062Q1315 1115 1317 1135Q1315 1175 1305 1190L1275 1215L1275 1285Q1250 1320 1240 1345Q1200 1395 1180 1440Q1165 1458 1155 1452L1135 1435L1120 1452L1103 1452Q1080 1415 1082 1385L1075 1340Q1090 1305 1113 1285L1107 1240L1115 1190Q1155 1160 1200 1150Q1218 1130 1220 1097Z"/>
        </g>
        <g transform="translate(4680 1600) scale(.64796 .63776)">
          <path d="M750 535Q765 522 785 522L832 545L855 540Q855 590 870 592Q882 590 872 535Q880 525 900 528Q955 535 965 545Q1010 580 1030 595L1055 597L1062 645L1097 660L1097 712L1130 758Q1132 800 1118 822Q1105 832 1090 820Q1050 805 1035 778Q1020 758 1008 765L1005 793L940 792Q910 765 895 765L853 750Q870 700 865 670L805 655Q770 620 750 578Z"/>
          <path d="M825 915L830 995L842 1000L848 1190L1030 1190L1030 1370Q1035 1400 1013 1445Q990 1445 978 1425L960 1422L955 1435L935 1433Q935 1385 905 1372Q870 1365 820 1378Q795 1390 755 1438L685 1455L660 1483L615 1483Q590 1470 592 1455Q605 1430 600 1403L578 1397Q575 1360 553 1335L520 1270L512 1200L508 1188Q520 1165 535 1155Q610 1120 662 1080Q668 1040 675 1015L710 1038L712 1000Q750 950 768 938Q785 950 800 977Q810 935 825 915Z"/>
          <path d="M825 915Q870 885 940 885Q985 890 975 918Q935 955 940 978Q970 980 995 1003Q1010 1018 1038 1023L1042 930L1057 918Q1050 870 1060 853L1080 853Q1105 890 1122 985Q1135 1005 1163 1025L1170 1050L1220 1120L1255 1185Q1285 1220 1283 1310Q1282 1345 1278 1350Q1250 1380 1242 1415Q1220 1455 1193 1485L1193 1513L1160 1515L1135 1533L1118 1533L1105 1522L1095 1533L1050 1533L1050 1515L1017 1515L1013 1445Q1035 1400 1030 1370L1030 1190L848 1190L842 1000L830 995Z"/>
        </g>
      </svg>
      <button class="pin" style="--x:3.7;--y:10"><span>Alaska</span></button>
      <button class="pin" style="--x:15;--y:8"><span>Canada</span></button>
      <button class="pin" style="--x:31;--y:4"><span>Greenland</span></button>
      <button class="pin" style="--x:12;--y:20"><span>Aberta</span></button>
      <button class="pin" style="--x:20;--y:20"><span>Ontario</span></button>
      <button class="pin" style="--x:28;--y:24"><span>Toronto</span></button>
      <button class="pin" style="--x:12;--y:33"><span>California</span></button>
      <button class="pin" style="--x:21;--y:38"><span>New York</span></button>
      <button class="pin" style="--x:9.5;--y:54"><span>Mexico</span></button>
      <button class="pin" style="--x:22;--y:58"><span>Colombia</span></button>
      <button class="pin" style="--x:28;--y:74"><span>Brazil</span></button>
      <button class="pin" style="--x:15.5;--y:80"><span>Bolivia</span></button>
      <button class="pin" style="--x:21;--y:98"><span>Argentina</span></button>
      <button class="pin" style="--x:38.8;--y:13"><span>Iceland</span></button>
      <button class="pin" style="--x:46;--y:12"><span>Sweden</span></button>
      <button class="pin" style="--x:53;--y:24"><span>Ukraine</span></button>
      <button class="pin" style="--x:36;--y:28"><span>Great Britain</span></button>
      <button class="pin" style="--x:44;--y:32"><span>Germany</span></button>
      <button class="pin" style="--x:46;--y:44"><span>Italy</span></button>
      <button class="pin" style="--x:36.5;--y:48"><span>Spain</span></button>
      <button class="pin" style="--x:57;--y:54"><span>Middle East</span></button>
      <button class="pin" style="--x:62;--y:18"><span>Ural</span></button>
      <button class="pin" style="--x:61;--y:38"><span>Afghanistan</span></button>
      <button class="pin" style="--x:67;--y:6"><span>Russia</span></button>
      <button class="pin" style="--x:75;--y:6"><span>Siberia</span></button>
      <button class="pin" style="--x:83;--y:8"><span>kamchatka</span></button>
      <button class="pin" style="--x:73.5;--y:22"><span>Korea</span></button>
      <button class="pin" style="--x:75;--y:35"><span>Mongolia</span></button>
      <button class="pin" style="--x:74;--y:48"><span>China</span></button>
      <button class="pin" style="--x:66;--y:56"><span>India</span></button>
      <button class="pin" style="--x:73.5;--y:64"><span>Indonesia</span></button>
      <button class="pin" style="--x:47.9;--y:60"><span>Egypt</span></button>
      <button class="pin" style="--x:41;--y:70"><span>North Africa</span></button>
      <button class="pin" style="--x:54;--y:78"><span>Ethiopia</span></button>
      <button class="pin" style="--x:47.6;--y:86"><span>Congo</span></button>
      <button class="pin" style="--x:49.5;--y:100"><span>South Africa</span></button>
      <button class="pin" style="--x:63;--y:104"><span>Madagascar</span></button>
      <button class="pin" style="--x:90;--y:75"><span>New Zealand</span></button>
      <button class="pin" style="--x:88;--y:98"><span>Eastern Australia</span></button>
      <button class="pin" style="--x:77.7;--y:104"><span>Western Australia</span></button>
    </div>
  </section>
</main>
</body>
</html>
```
FILE: styles.css
```css
*, *::before, *::after {
  box-sizing: border-box;
}

html {
  background: #fff;
}

body {
  margin: 0;
  min-height: 100vh;
  display: flex;
  flex-direction: column;
  font-family: "Noto Sans", "Open Sans", sans-serif;
  color: #212529;
}

/* cyan bands above and below the board leave a thin gutter on the right */
body::before,
body::after {
  content: "";
  margin-right: 3px;
  background: #0dcaf0;
}

body::before {
  height: 156px;
}

body::after {
  flex: 1;
}

.defs {
  position: absolute;
}

.board {
  display: grid;
  grid-template-columns: minmax(0, 1440fr) minmax(0, 2527fr);
  column-gap: 81px;
  padding: 41px 0 10px 48px;
  background: #0dcaf0;
  overflow: hidden;
}

/* team cards */
.teams {
  display: flex;
  flex-direction: column;
  gap: 36px;
}

.team {
  padding: 55px 55px 70px;
  border-radius: 70px;
}

.team-red { background: #dc3545; }
.team-green { background: #198754; }
.team-yellow { background: #ffc107; }
.team-blue { background: #0d6efd; }

.team-name {
  margin: 0 0 24px;
  height: 96px;
  padding-bottom: 12px;
  display: flex;
  align-items: center;
  justify-content: center;
  border-radius: 32px;
  background: #fff;
  box-shadow: 0 7px 0 rgba(255, 255, 255, .6);
  font-size: 58px;
  font-weight: 500;
  line-height: 1;
}

.scores {
  display: grid;
  grid-template-columns: repeat(3, 1fr);
  gap: 36px;
  padding: 0 27px;
}

.score {
  height: 219px;
  padding-left: 10px;
  display: flex;
  align-items: center;
  justify-content: center;
  gap: 38px;
  border-radius: 34px;
  background: #fff;
  box-shadow: 0 7px 0 rgba(255, 255, 255, .6);
  font-size: 88px;
  font-weight: 600;
  line-height: 1;
}

.score span {
  padding-bottom: 12px;
}

.medal {
  width: 80px;
  height: 150px;
}

/* map column */
.world {
  padding-top: 18px;
}

.options {
  display: flex;
  flex-direction: column;
  align-items: flex-start;
  gap: 63px;
}

.option {
  display: flex;
  align-items: center;
  gap: 18px;
  font-size: 52px;
  line-height: 76px;
}

.option span {
  padding-bottom: 2px;
}

.option input {
  appearance: none;
  width: 78px;
  height: 78px;
  margin: 0;
  border: 2px solid #dee2e6;
  border-radius: 50%;
  background: #fff center / 78px 78px no-repeat;
}

.option input:checked {
  border-color: #0d6efd;
  background-color: #0d6efd;
  background-image: url("data:image/svg+xml,%3Csvg xmlns='http://www.w3.org/2000/svg' viewBox='0 0 20 20'%3E%3Cpath fill='none' stroke='%23fff' stroke-linecap='round' stroke-linejoin='round' stroke-width='3' d='m6 10 3 3 6-6'/%3E%3C/svg%3E");
}

.map {
  position: relative;
  margin: 82px -7px 0 256px;
}

.land {
  display: block;
  width: 100%;
  overflow: visible;
  fill: #3c3c3c;
  stroke: #000;
  stroke-width: 7;
  stroke-linejoin: round;
}

.land .green { fill: #0f9d58; }
.land .blue { fill: #4285f4; }
.land .yellow { fill: #f4b400; }
.land .water { fill: #0dcaf0; stroke-width: 3; }

.pin {
  position: absolute;
  left: calc(var(--x) * 1%);
  top: calc(var(--y) * 1%);
  width: 160px;
  height: 55px;
  padding: 0;
  display: flex;
  align-items: center;
  justify-content: center;
  border: 0;
  border-radius: 16px;
  background: #f8f9fa;
  box-shadow: 0 6px 0 #dee2e6;
  font: inherit;
}

.pin span {
  padding: 3px 8px 8px;
  border-radius: 5px;
  background: #595959;
  box-shadow: 0 2px 0 #404040;
  color: #fff;
  font-size: 12px;
  font-weight: 700;
  line-height: 14px;
  white-space: nowrap;
}
```
